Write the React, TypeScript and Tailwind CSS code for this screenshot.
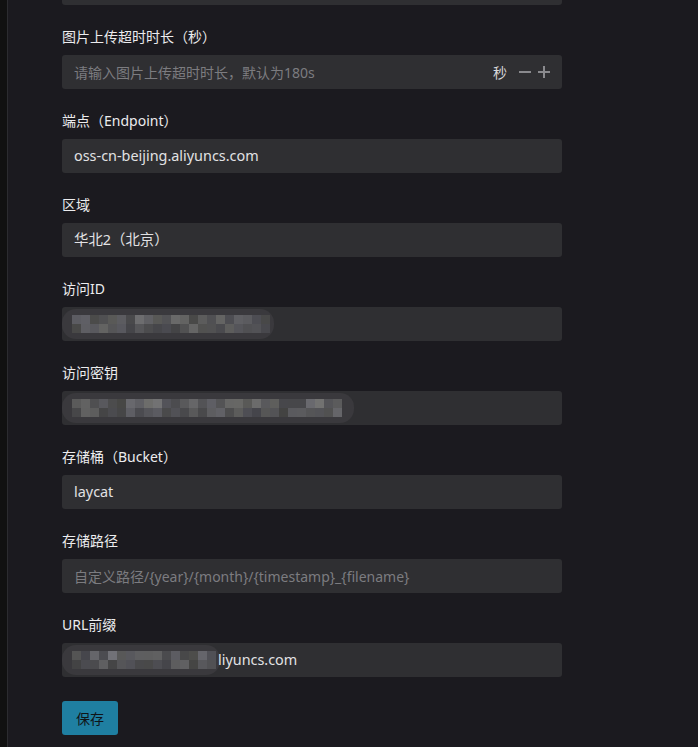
import React from "react";

const font = { fontFamily: '"Noto Sans", "Noto Sans CJK SC", sans-serif' };

// deterministic grey tones for the masked (pixelated) values
function tones(seed: number, n: number) {
  const out: string[] = [];
  let s = seed;
  for (let i = 0; i < n; i++) {
    s = (s * 9301 + 49297) % 233280;
    const v = 70 + Math.floor((s / 233280) * 45);
    const b = v + Math.floor(((s >> 3) % 9)) - 2;
    out.push(`rgb(${v},${v},${b})`);
  }
  return out;
}

function Mosaic({ cols, seed, width }: { cols: number; seed: number; width: number }) {
  const top = tones(seed, cols);
  const bottom = tones(seed + 17, cols);
  return (
    <svg width={width} height={34} className="absolute left-0 top-0">
      <rect x={0} y={2} width={width} height={30} rx={14} fill="#3a393d" />
      {top.map((c, i) => (
        <rect key={"t" + i} x={10 + i * 9} y={8} width={9} height={9} fill={c} />
      ))}
      {bottom.map((c, i) => (
        <rect key={"b" + i} x={10 + i * 9} y={17} width={9} height={9} fill={c} opacity={0.8} />
      ))}
    </svg>
  );
}

type Field = {
  label: string;
  value?: string;
  placeholder?: string;
  mask?: { cols: number; seed: number; width: number };
  suffix?: boolean;
  valuePad?: number;
};

const fields: Field[] = [
  { label: "图片上传超时时长（秒）", placeholder: "请输入图片上传超时时长，默认为180s", suffix: true },
  { label: "端点（Endpoint）", value: "oss-cn-beijing.aliyuncs.com" },
  { label: "区域", value: "华北2（北京）" },
  { label: "访问ID", mask: { cols: 22, seed: 7, width: 212 } },
  { label: "访问密钥", mask: { cols: 30, seed: 31, width: 292 } },
  { label: "存储桶（Bucket）", value: "laycat" },
  { label: "存储路径", placeholder: "自定义路径/{year}/{month}/{timestamp}_{filename}" },
  { label: "URL前缀", value: "liyuncs.com", mask: { cols: 16, seed: 53, width: 158 }, valuePad: 156 },
];

function Input({ f }: { f: Field }) {
  return (
    <div className="relative flex h-[34px] w-[500px] items-center rounded-[3px] bg-[#2f2f32] px-3 text-[14px]">
      {f.mask && <Mosaic {...f.mask} />}
      {f.value && (
        <span
          className="relative text-[14.4px] text-[#e2e2e4]"
          style={{ paddingLeft: f.valuePad ? f.valuePad - 12 : 0 }}
        >
          {f.value}
        </span>
      )}
      {f.placeholder && <span className="text-[#7c7c80]">{f.placeholder}</span>}
      {f.suffix && (
        <div className="ml-auto flex items-center gap-[12px] text-[#d8d8da]">
          <span>秒</span>
          <span className="flex items-center gap-[7px] text-[#8a8a8e]">
            <svg width="12" height="12" viewBox="0 0 12 12">
              <rect x="0" y="5" width="12" height="2" fill="currentColor" />
            </svg>
            <svg width="12" height="12" viewBox="0 0 12 12">
              <rect x="0" y="5" width="12" height="2" fill="currentColor" />
              <rect x="5" y="0" width="2" height="12" fill="currentColor" />
            </svg>
          </span>
        </div>
      )}
    </div>
  );
}

export default function App() {
  return (
    <div className="flex h-[747px] w-[698px] overflow-hidden bg-[#1b1a1f]" style={font}>
      <div className="w-[8px] shrink-0 border-r border-[#2c2c30] bg-[#111111]" />
      <div className="flex flex-col pl-[54px]">
        <div className="-mt-[29px] h-[34px] w-[500px] rounded-[3px] bg-[#2f2f32]" />
        {fields.map((f) => (
          <div key={f.label} className="mt-[22px] flex flex-col gap-[8px]">
            <label className="h-[20px] text-[14px] leading-[20px] text-[#ececee]">{f.label}</label>
            <Input f={f} />
          </div>
        ))}
        <button className="mt-[24px] h-[34px] w-[56px] rounded-[3px] bg-[#1f7fa1] text-[14px] text-[#101418]">
          保存
        </button>
      </div>
    </div>
  );
}
